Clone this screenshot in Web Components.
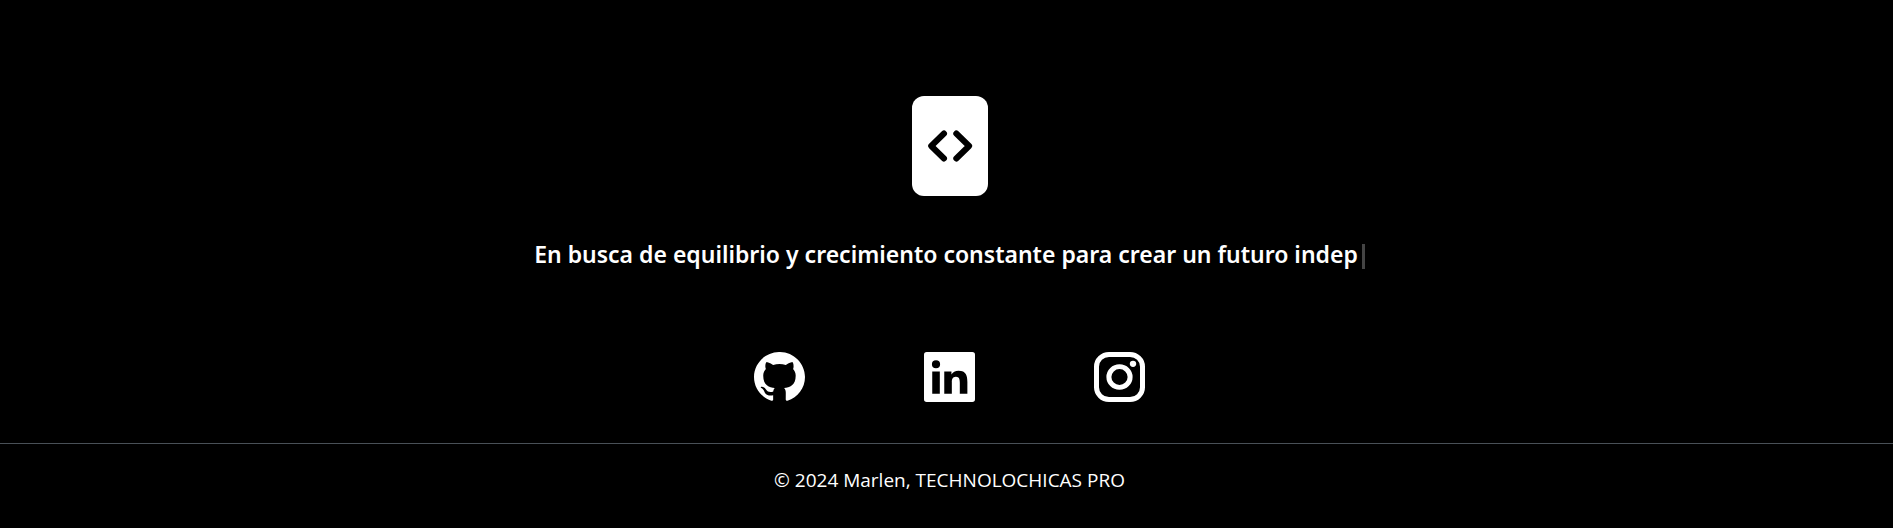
<!DOCTYPE html>
<html lang="es">
<head>
<meta charset="utf-8">
<meta name="viewport" content="width=device-width, initial-scale=1">
<title>Marlen</title>
<style>
  body {
    margin: 0;
    background: #000;
    color: #fff;
    font-family: "Segoe UI", "Open Sans", "Noto Sans", sans-serif;
  }
</style>
</head>
<body>
<site-footer>
  <code-logo slot="logo"></code-logo>
  <typed-text slot="motto">En busca de equilibrio y crecimiento constante para crear un futuro indep</typed-text>
  <social-link slot="social" href="https://github.com" label="GitHub">
    <svg viewBox="0 0 24 24" preserveAspectRatio="none" aria-hidden="true"><path transform="translate(0 -.3)" fill="#fff" d="M12 .297c-6.63 0-12 5.373-12 12 0 5.303 3.438 9.8 8.205 11.385.6.113.82-.258.82-.577 0-.285-.01-1.04-.015-2.04-3.338.724-4.042-1.61-4.042-1.61C4.422 18.07 3.633 17.7 3.633 17.7c-1.087-.744.084-.729.084-.729 1.205.084 1.838 1.236 1.838 1.236 1.07 1.835 2.809 1.305 3.495.998.108-.776.417-1.305.76-1.605-2.665-.3-5.466-1.332-5.466-5.93 0-1.31.465-2.38 1.235-3.22-.135-.303-.54-1.523.105-3.176 0 0 1.005-.322 3.3 1.23.96-.267 1.98-.399 3-.405 1.02.006 2.04.138 3 .405 2.28-1.552 3.285-1.23 3.285-1.23.645 1.653.24 2.873.12 3.176.765.84 1.23 1.91 1.23 3.22 0 4.61-2.805 5.625-5.475 5.92.42.36.81 1.096.81 2.22 0 1.606-.015 2.896-.015 3.286 0 .315.21.69.825.57C20.565 22.092 24 17.592 24 12.297c0-6.627-5.373-12-12-12"/></svg>
  </social-link>
  <social-link slot="social" href="https://www.linkedin.com" label="LinkedIn">
    <svg viewBox="32 32 448 448" preserveAspectRatio="none" aria-hidden="true"><path fill="#fff" d="M456 32H56a24 24 0 0 0-24 24v400a24 24 0 0 0 24 24h400a24 24 0 0 0 24-24V56a24 24 0 0 0-24-24zM170.900 405.400h-66.500V207h66.500zM137.500 177a36 36 0 1 1 0-72 36 36 0 0 1 0 72zM413 405.400h-66.500V306c0-26-4-52-34-52-31 0-36 25-36 50v101.400h-66.500V207h63v27c12-20 33-33 62-33 67 0 78 44 78 102z"/></svg>
  </social-link>
  <social-link slot="social" href="https://www.instagram.com" label="Instagram">
    <svg viewBox="0 0 51 51" preserveAspectRatio="none" aria-hidden="true" fill="none" stroke="#fff"><rect x="2.500" y="2.500" width="46" height="46" rx="12.500" stroke-width="5"/><circle cx="25.500" cy="25.500" r="10.600" stroke-width="5"/><circle cx="39" cy="12" r="3.200" fill="#fff" stroke="none"/></svg>
  </social-link>
  <span slot="copyright">© 2024 Marlen, TECHNOLOCHICAS PRO</span>
</site-footer>

<script>
  class ShadowElement extends HTMLElement {
    constructor() {
      super();
      this.attachShadow({ mode: "open" }).innerHTML = this.constructor.markup;
    }
  }

  class SiteFooter extends ShadowElement {
    static markup = `
      <style>
        :host { display: block; }
        .intro { display: flex; flex-direction: column; align-items: center; padding: 96px 16px 41px 22px; }
        h2 { margin: 40px 0 80px; font-family: "Segoe UI", "Noto Sans", "Open Sans", sans-serif; font-size: 23px; line-height: 36px; font-weight: 600; text-align: center; }
        nav { display: flex; flex-wrap: wrap; justify-content: center; gap: 24px 119px; }
        .legal { border-top: 1px solid #495057; padding: 20px 16px 32px 22px; text-align: center; }
        p { margin: 0; font-size: 19px; line-height: 32px; }
      </style>
      <footer>
        <div class="intro">
          <slot name="logo"></slot>
          <h2><slot name="motto"></slot></h2>
          <nav aria-label="Redes sociales"><slot name="social"></slot></nav>
        </div>
        <div class="legal"><p><slot name="copyright"></slot></p></div>
      </footer>`;
  }

  class CodeLogo extends ShadowElement {
    static markup = `
      <style>
        :host { display: block; }
        svg { display: block; width: 76px; height: 100px; }
      </style>
      <svg viewBox="0 0 76 100" role="img" aria-label="Código">
        <rect width="76" height="100" rx="12" fill="#fff"/>
        <path d="M32 37.500 19.200 50 32 62.500M44.300 37.500 57.100 50 44.300 62.500" fill="none" stroke="#000" stroke-width="6" stroke-linecap="round" stroke-linejoin="round"/>
      </svg>`;
  }

  class TypedText extends ShadowElement {
    static markup = `
      <style>
        :host { display: inline; }
        .cursor { display: inline-block; width: 3px; height: 25px; margin-left: 4px; vertical-align: -6px; background: #444; }
      </style>
      <slot></slot><span class="cursor" aria-hidden="true"></span>`;
  }

  class SocialLink extends ShadowElement {
    static markup = `
      <style>
        :host { display: block; }
        a { display: block; width: 51px; height: 50px; }
        ::slotted(svg) { display: block; width: 100%; height: 100%; }
      </style>
      <a><slot></slot></a>`;
    connectedCallback() {
      const link = this.shadowRoot.querySelector("a");
      link.href = this.getAttribute("href");
      link.setAttribute("aria-label", this.getAttribute("label"));
    }
  }

  customElements.define("site-footer", SiteFooter);
  customElements.define("code-logo", CodeLogo);
  customElements.define("typed-text", TypedText);
  customElements.define("social-link", SocialLink);
</script>
</body>
</html>
